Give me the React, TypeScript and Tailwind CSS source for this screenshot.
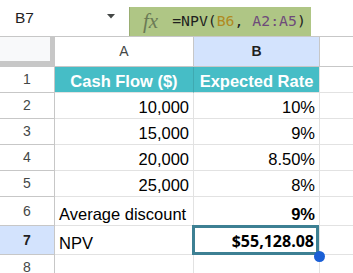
import React from "react";

type Row = {
  n: number;
  h: string;
  a: string;
  b: string;
  aAlign?: "left" | "right";
  bBold?: boolean;
};

const ROWS: Row[] = [
  { n: 2, h: "h-[26px]", a: "10,000", b: "10%" },
  { n: 3, h: "h-[26px]", a: "15,000", b: "9%" },
  { n: 4, h: "h-[26px]", a: "20,000", b: "8.50%" },
  { n: 5, h: "h-[26px]", a: "25,000", b: "8%" },
  { n: 6, h: "h-[29px]", a: "Average discount", b: "9%", aAlign: "left", bBold: true },
];

function RowNum({ n, selected }: { n: number; selected?: boolean }) {
  return (
    <div
      className={`w-[55px] shrink-0 flex items-center justify-center border-r border-b border-[#c7c7c7] text-[14px] ${
        selected ? "bg-[#d3e3fd] text-[#1f1f1f] font-bold" : "bg-white text-[#444746]"
      }`}
    >
      {n}
    </div>
  );
}

export default function App() {
  return (
    <div className="relative w-[353px] h-[273px] overflow-hidden bg-white font-['Liberation_Sans',Arial,sans-serif] text-black">
      {/* name box + formula bar */}
      <div className="flex h-[37px] border-b border-[#c7c7c7]">
        <div className="w-[129px] shrink-0 flex items-center pl-[15px] pb-[1px]">
          <span className="text-[15.5px] text-[#1f1f1f]">B7</span>
          <svg className="ml-[73px] mb-[2px]" width="8" height="5" viewBox="0 0 8 5">
            <path d="M0 0 L8 0 L4 4.5 Z" fill="#444746" />
          </svg>
        </div>
        <div className="mt-[7px] w-[182px] bg-[#afc685] border-l border-[#9aae73] flex items-center">
          <span className="ml-[13px] font-['Liberation_Serif',serif] italic text-[21px] leading-none text-[#6b7a55]">
            fx
          </span>
          <span className="ml-[14px] font-['DejaVu_Sans_Mono',monospace] text-[14.8px] text-[#1f1f1f] whitespace-pre">
            =NPV(<span className="text-[#b08a22]">B6</span>, <span className="text-[#6e4a7a]">A2:A5</span>)
          </span>
        </div>
      </div>

      {/* column headers */}
      <div className="flex h-[30px] border-b border-[#c7c7c7]">
        <div className="w-[55px] shrink-0 bg-[#f8f9fa] border-r-[5px] border-b-[5px] border-[#c7c7c7]" />
        <div className="w-[139px] shrink-0 flex items-center justify-center border-r border-[#c7c7c7] text-[14px] text-[#444746]">
          A
        </div>
        <div className="w-[126px] shrink-0 flex items-center justify-center border-r border-[#c7c7c7] bg-[#d3e3fd] text-[14px] font-bold text-[#1f1f1f]">
          B
        </div>
        <div className="flex-1" />
      </div>

      {/* row 1: headings */}
      <div className="flex h-[26px]">
        <RowNum n={1} />
        <div className="w-[139px] shrink-0 flex items-end justify-center pb-[1px] bg-[#46bdc6] border-r border-[#3fa9b1] border-b border-b-[#e2e2e2] text-[16.5px] leading-[19px] font-bold text-white">
          Cash Flow ($)
        </div>
        <div className="w-[126px] shrink-0 flex items-end justify-center pb-[1px] bg-[#46bdc6] border-r border-[#e2e2e2] border-b text-[16.5px] leading-[19px] font-bold text-white">
          Expected Rate
        </div>
        <div className="flex-1 border-b border-[#e2e2e2]" />
      </div>

      {ROWS.map((r) => (
        <div key={r.n} className={`flex ${r.h}`}>
          <RowNum n={r.n} />
          <div
            className={`w-[139px] shrink-0 flex items-end pb-[1px] border-r border-b border-[#e2e2e2] text-[16.5px] leading-[19px] ${
              r.aAlign === "left" ? "justify-start pl-[4px]" : "justify-end pr-[4px]"
            }`}
          >
            {r.a}
          </div>
          <div
            className={`w-[126px] shrink-0 flex items-end justify-end pr-[4px] pb-[1px] border-r border-b border-[#e2e2e2] text-[16.5px] leading-[19px] ${
              r.bBold ? "font-bold" : ""
            }`}
          >
            {r.b}
          </div>
          <div className="flex-1 border-b border-[#e2e2e2]" />
        </div>
      ))}

      {/* row 7: NPV */}
      <div className="flex h-[29px]">
        <RowNum n={7} selected />
        <div className="w-[139px] shrink-0 flex items-end pl-[4px] pb-[1px] border-r border-b border-[#e2e2e2] text-[16.5px] leading-[19px]">
          NPV
        </div>
        <div className="w-[126px] shrink-0 flex items-end justify-end pr-[5px] pb-[3px] border-r border-b border-[#e2e2e2] font-['Open_Sans',sans-serif] font-bold text-[16px] leading-[19px]">
          $55,128.08
        </div>
        <div className="flex-1 border-b border-[#e2e2e2]" />
      </div>

      {/* row 8 */}
      <div className="flex h-[26px]">
        <RowNum n={8} />
        <div className="w-[139px] shrink-0 border-r border-b border-[#e2e2e2]" />
        <div className="w-[126px] shrink-0 border-r border-b border-[#e2e2e2]" />
        <div className="flex-1 border-b border-[#e2e2e2]" />
      </div>

      {/* selection on B7 */}
      <div className="absolute left-[192px] top-[225px] w-[127px] h-[30px] border-[3px] border-[#3d8093]" />
      <div className="absolute left-[314px] top-[251px] w-[11px] h-[11px] rounded-full bg-[#1a5fd6]" />
    </div>
  );
}
